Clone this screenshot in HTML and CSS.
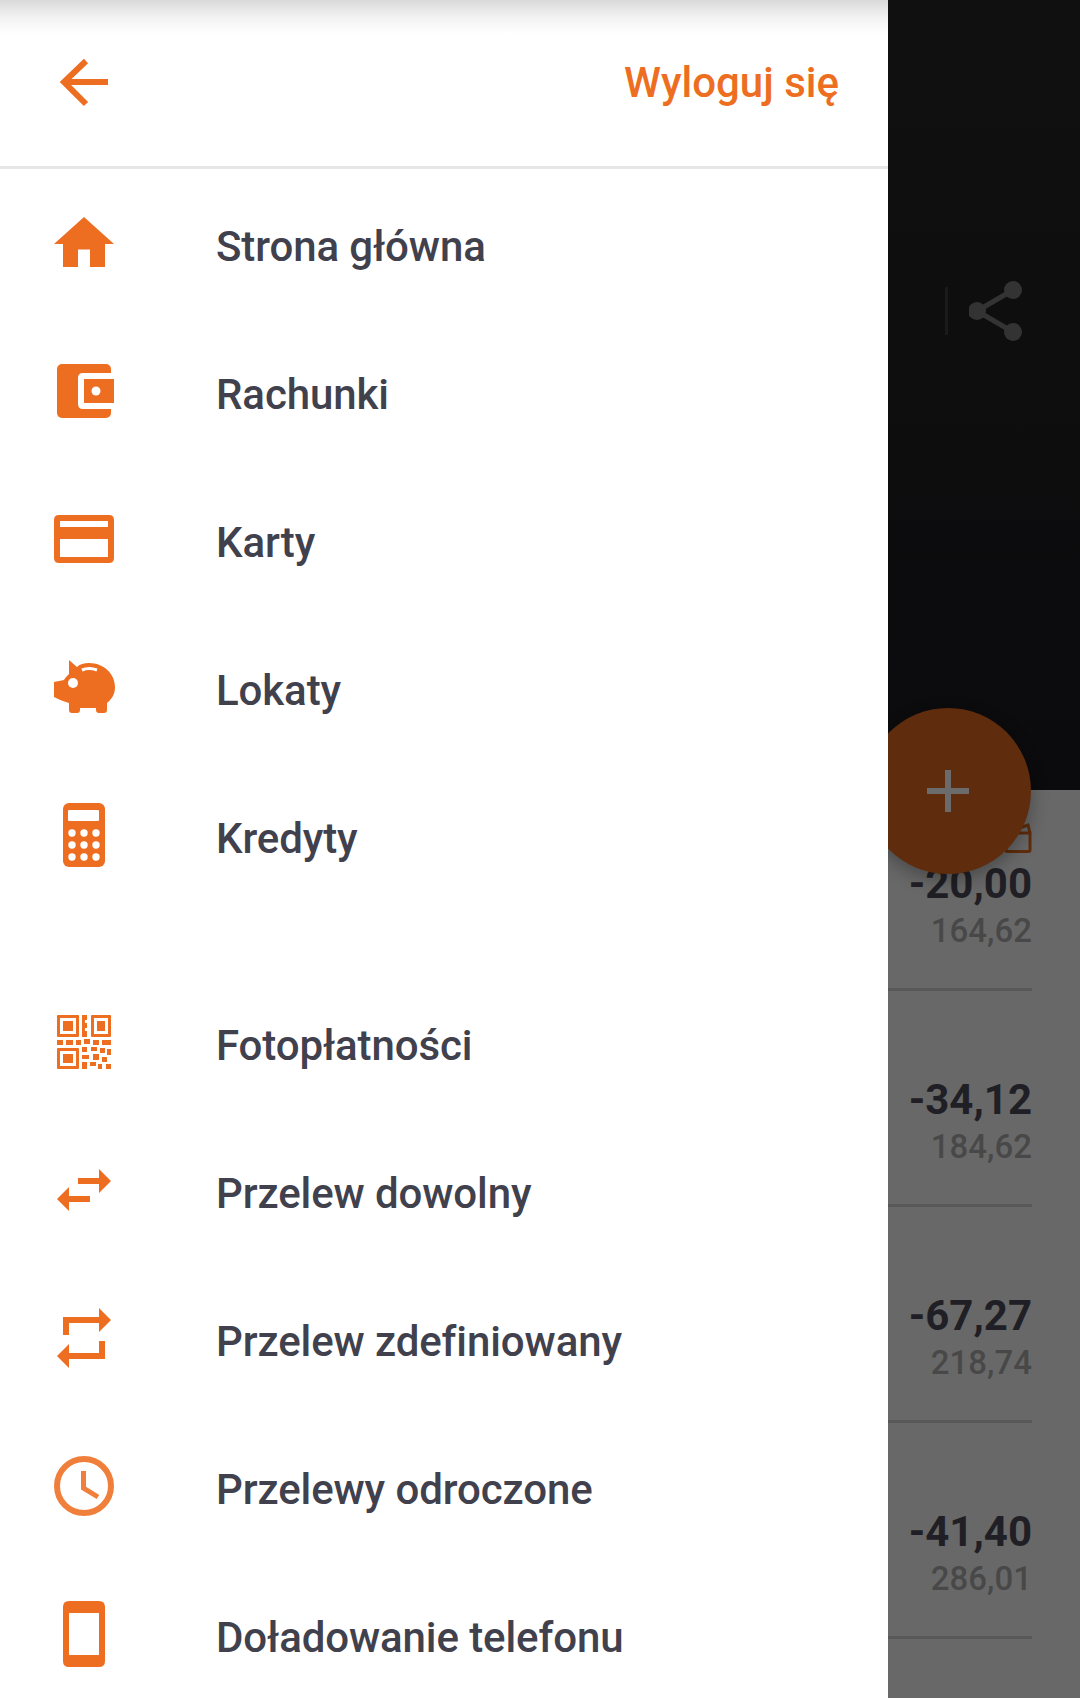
FILE: index.html
```html
<!DOCTYPE html>
<html lang="pl">
<head>
<meta charset="utf-8">
<title>Menu</title>
<link rel="stylesheet" href="styles.css">
</head>
<body>
<div class="screen">

  <div class="drawer">
    <div class="drawer-head">
      <svg class="ico" viewBox="0 0 68 68"><path class="line" d="M58 34H14M36 13L14 34L36 56"/></svg>
      <span class="logout">Wyloguj się</span>
    </div>

    <div class="menu">
      <div class="item">
        <svg class="ico" viewBox="0 0 68 68"><path d="M34 8L64 35H55V58H40V40.500H28V58H13V35H4Z"/></svg>
        <span>Strona główna</span>
      </div>
      <div class="item">
        <svg class="ico" viewBox="0 0 68 68">
          <rect x="7" y="7" width="54" height="54" rx="5"/>
          <path class="white" d="M64 16H33Q28 16 28 21V47Q28 52 33 52H64Z"/>
          <rect x="34" y="22" width="30" height="24"/>
          <circle class="white" cx="46" cy="34" r="4.500"/>
        </svg>
        <span>Rachunki</span>
      </div>
      <div class="item">
        <svg class="ico" viewBox="0 0 68 68"><path fill-rule="evenodd" d="M9 10H59Q64 10 64 15V53Q64 58 59 58H9Q4 58 4 53V15Q4 10 9 10ZM10 16V22H58V16ZM10 34V52H58V34Z"/></svg>
        <span>Karty</span>
      </div>
      <div class="item">
        <svg class="ico" viewBox="0 0 68 68">
          <path d="M19 7L27 14C30 11 34 10 39 10C54 10 65 21 65 34C65 41 62 46 57 50V57Q57 60 54 60H49Q46 60 46 57V55H30V57Q30 60 27 60H22Q19 60 19 57V50C12 48 8 46 4 44V29L14 27C15 25 17 23 19 21Z"/>
          <circle class="white" cx="23" cy="30" r="5"/>
          <path class="slot" d="M32 17Q39 14 47 17"/>
        </svg>
        <span>Lokaty</span>
      </div>
      <div class="item">
        <svg class="ico" viewBox="0 0 68 68">
          <rect x="13" y="2" width="42" height="64" rx="6"/>
          <rect class="white" x="18" y="9" width="31" height="11" rx="1"/>
          <g class="white">
            <circle cx="22" cy="32" r="3.700"/><circle cx="34" cy="32" r="3.700"/><circle cx="46" cy="32" r="3.700"/>
            <circle cx="22" cy="44" r="3.700"/><circle cx="34" cy="44" r="3.700"/><circle cx="46" cy="44" r="3.700"/>
            <circle cx="22" cy="56" r="3.700"/><circle cx="34" cy="56" r="3.700"/><circle cx="46" cy="56" r="3.700"/>
          </g>
        </svg>
        <span>Kredyty</span>
      </div>
    </div>

    <div class="menu menu-second">
      <div class="item">
        <svg class="ico" viewBox="0 0 68 68">
          <path fill-rule="evenodd" d="M8 7H28Q29 7 29 8V28Q29 29 28 29H8Q7 29 7 28V8Q7 7 8 7ZM10 10V26H26V10ZM42 7H60Q61 7 61 8V28Q61 29 60 29H42Q41 29 41 28V8Q41 7 42 7ZM44 10V26H58V10ZM8 40H28Q29 40 29 41V60Q29 61 28 61H8Q7 61 7 60V41Q7 40 8 40ZM10 43V58H26V43Z"/>
          <path d="M13 13H23V23H13ZM47 13H55V23H47ZM13 46H23V55H13Z"/>
          <path d="M32 7H37V12H35V15H37V20H35V23H37V29H32ZM7 32H13V37H7ZM16 32H23V37H16ZM26 32H31V37H26ZM34 31H40V36H34ZM43 32H49V37H43ZM52 32H61V37H52ZM32 39H37V44H32ZM41 39H47V43H41ZM50 40H55V45H50ZM57 41H61V47H57ZM32 47H39V51H32ZM43 46H49V52H43ZM52 49H57V54H52ZM32 54H37V61H32ZM40 54H46V58H40ZM48 56H52V61H48ZM56 56H61V61H56Z"/>
        </svg>
        <span>Fotopłatności</span>
      </div>
      <div class="item">
        <svg class="ico" viewBox="0 0 68 68"><path d="M28 22H49V13L61 25L49 37V28H28ZM40 40H19V31L7 43L19 55V46H40Z"/></svg>
        <span>Przelew dowolny</span>
      </div>
      <div class="item">
        <svg class="ico" viewBox="0 0 68 68"><path d="M13 13H49V4L61 16L49 28V19H19V31H13ZM55 37V55H19V64L7 52L19 40V49H49V37Z"/></svg>
        <span>Przelew zdefiniowany</span>
      </div>
      <div class="item">
        <svg class="ico clock" viewBox="0 0 68 68">
          <circle cx="34" cy="34" r="27"/>
          <path d="M33.500 19V36L48 45"/>
        </svg>
        <span>Przelewy odroczone</span>
      </div>
      <div class="item">
        <svg class="ico" viewBox="0 0 68 68"><path fill-rule="evenodd" d="M19 1H49Q55 1 55 7V61Q55 67 49 67H19Q13 67 13 61V7Q13 1 19 1ZM19 13V55H49V13Z"/></svg>
        <span>Doładowanie telefonu</span>
      </div>
    </div>
  </div>

  <div class="content">
    <div class="hero">
      <span class="hero-sep"></span>
      <svg class="share" viewBox="0 0 54 72">
        <path d="M44 10L8 31L44 52"/>
        <circle cx="44" cy="10" r="9"/>
        <circle cx="8" cy="31" r="9"/>
        <circle cx="44" cy="52" r="9"/>
      </svg>
    </div>

    <div class="row row-first">
      <svg class="row-ico" viewBox="0 0 28 30"><path d="M2 10H26V27Q26 28.500 24.500 28.500H3.500Q2 28.500 2 27ZM2 10L24 2L26 10"/></svg>
      <div class="amount">-20,00</div>
      <div class="saldo">164,62</div>
    </div>
    <div class="row">
      <div class="amount">-34,12</div>
      <div class="saldo">184,62</div>
    </div>
    <div class="row">
      <div class="amount">-67,27</div>
      <div class="saldo">218,74</div>
    </div>
    <div class="row">
      <div class="amount">-41,40</div>
      <div class="saldo">286,01</div>
    </div>

    <div class="fab">
      <svg viewBox="0 0 42 42"><path d="M21 0V42M0 21H42"/></svg>
    </div>
  </div>

</div>
</body>
</html>
```

FILE: styles.css
```css
* { box-sizing: border-box; }

body {
  margin: 0;
  font-family: Roboto, "Liberation Sans", sans-serif;
}

.screen {
  display: flex;
  width: 1080px;
  height: 1698px;
  overflow: hidden;
}

/* drawer */
.drawer {
  position: relative;
  z-index: 2;
  flex: none;
  width: 888px;
  background: #fff;
}

.drawer-head {
  display: flex;
  align-items: center;
  justify-content: space-between;
  height: 169px;
  padding: 0 49px 2px 50px;
  border-bottom: 3px solid #e6e6e6;
  background: linear-gradient(#d9d9d9, #f3f3f3 18px, #fff 34px);
}

.logout {
  font-size: 42px;
  font-weight: 500;
  color: #ee6e21;
}

.ico {
  flex: none;
  width: 68px;
  height: 68px;
  fill: #ee6e21;
}

.ico .line {
  fill: none;
  stroke: #ee6e21;
  stroke-width: 6;
}

.ico .white { fill: #fff; }

.ico .slot {
  fill: none;
  stroke: #fff;
  stroke-width: 3;
}

.ico.clock { fill: none; stroke: #f07f3c; stroke-width: 6; }
.ico.clock path { stroke-width: 5; }

.menu-second { margin-top: 59px; }

.item {
  display: flex;
  align-items: center;
  gap: 98px;
  height: 148px;
  padding-left: 50px;
  font-size: 42px;
  font-weight: 500;
  letter-spacing: -0.1px;
  color: #41414d;
}

.item span {
  position: relative;
  top: 3px;
}

/* dimmed page behind the drawer */
.content {
  position: relative;
  flex: 1;
  background: #686868;
}

.hero {
  display: flex;
  align-items: flex-start;
  gap: 21px;
  height: 790px;
  padding: 280px 0 0 57px;
  background: linear-gradient(#101010, #0b0b0d);
}

.hero-sep {
  width: 3px;
  height: 48px;
  margin-top: 7px;
  background: #1a1a1a;
}

.share {
  width: 54px;
  height: 72px;
  fill: #333;
  stroke: #333;
  stroke-width: 0;
}

.share path {
  fill: none;
  stroke-width: 5;
}

.row {
  display: flex;
  flex-direction: column;
  align-items: flex-end;
  justify-content: flex-end;
  width: 144px;
  height: 216px;
  padding-bottom: 35px;
  border-bottom: 3px solid #585858;
}

.row-first { height: 201px; }

.row-ico {
  width: 28px;
  height: 30px;
  margin-bottom: 6px;
  fill: none;
  stroke: #5f2d0d;
  stroke-width: 3;
}

.amount {
  height: 50px;
  font-size: 42px;
  line-height: 50px;
  font-weight: 700;
  color: #1f1f25;
}

.saldo {
  height: 44px;
  font-size: 33px;
  line-height: 44px;
  font-weight: 500;
  color: #484848;
}

.fab {
  position: absolute;
  top: 708px;
  left: -23px;
  display: flex;
  align-items: center;
  justify-content: center;
  width: 166px;
  height: 166px;
  border-radius: 50%;
  background: #5f2d0d;
  box-shadow: 0 6px 18px rgba(0, 0, 0, 0.3);
}

.fab svg {
  width: 42px;
  height: 42px;
  fill: none;
  stroke: #6b6b6b;
  stroke-width: 6;
}
```
